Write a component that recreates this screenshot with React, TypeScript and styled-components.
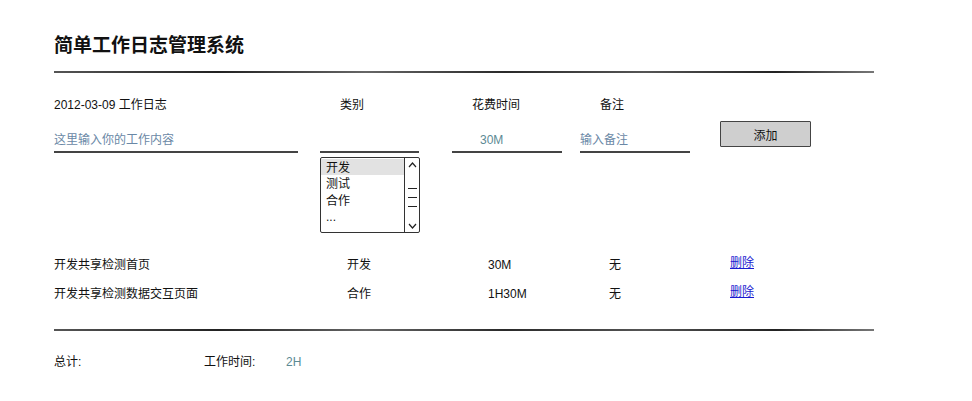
import styled, { createGlobalStyle } from 'styled-components';

const GlobalStyle = createGlobalStyle`
  body {
    margin: 0;
    background: #fff;
    color: #111;
    font-family: "Liberation Sans", "Noto Sans CJK SC", sans-serif;
    font-size: 12px;
  }
`;

const entries = [
  { task: '开发共享检测首页', kind: '开发', time: '30M', note: '无' },
  { task: '开发共享检测数据交互页面', kind: '合作', time: '1H30M', note: '无' },
];

const kinds = ['开发', '测试', '合作', '...'];

function App() {
  return (
    <Page>
      <GlobalStyle />
      <Title>简单工作日志管理系统</Title>
      <Rule />

      <HeaderRow>
        <Cell>2012-03-09 工作日志</Cell>
        <Cell $indent={20}>类别</Cell>
        <Cell $indent={20}>花费时间</Cell>
        <Cell $indent={20}>备注</Cell>
      </HeaderRow>

      <InputRow>
        <Field $width={244}>
          <Placeholder>这里输入你的工作内容</Placeholder>
        </Field>
        <Field $width={99} />
        <Field $width={110} $indent={28}>
          <TimeValue>30M</TimeValue>
        </Field>
        <Field $width={110}>
          <Placeholder>输入备注</Placeholder>
        </Field>
        <AddButton>添加</AddButton>
      </InputRow>

      <ListRow>
        <ListBox>
          <Options>
            {kinds.map((k, i) => (
              <Option key={k} $selected={i === 0}>
                {k}
              </Option>
            ))}
          </Options>
          <ScrollBar>
            <svg width="9" height="6" viewBox="0 0 9 6">
              <path d="M1 5 L4.5 1 L8 5" fill="none" stroke="#222" strokeWidth="1.2" />
            </svg>
            <Grip>
              <span />
              <span />
              <span />
            </Grip>
            <svg width="9" height="6" viewBox="0 0 9 6">
              <path d="M1 1 L4.5 5 L8 1" fill="none" stroke="#222" strokeWidth="1.2" />
            </svg>
          </ScrollBar>
        </ListBox>
      </ListRow>

      <Entries>
        {entries.map((e) => (
          <EntryRow key={e.task}>
            <Cell>{e.task}</Cell>
            <Cell $indent={27}>{e.kind}</Cell>
            <Cell $indent={36}>{e.time}</Cell>
            <Cell $indent={29}>{e.note}</Cell>
            <Cell $indent={10}>
              <DeleteLink href="#">删除</DeleteLink>
            </Cell>
          </EntryRow>
        ))}
      </Entries>

      <Rule $gap={20} />

      <Footer>
        <FooterLabel $width={150}>总计:</FooterLabel>
        <FooterLabel $width={82}>工作时间:</FooterLabel>
        <TotalValue>2H</TotalValue>
      </Footer>
    </Page>
  );
}

const Page = styled.div`
  width: 820px;
  padding: 32px 0 0 54px;
`;

const Title = styled.h1`
  margin: 0;
  font-size: 19px;
  line-height: 24px;
  font-weight: bold;
  font-family: "Noto Sans CJK SC", sans-serif;
`;

const Rule = styled.div<{ $gap?: number }>`
  height: 2px;
  margin-top: ${({ $gap }) => $gap ?? 15}px;
  background: linear-gradient(
    to right,
    #555 0%,
    #222 20%,
    #666 38%,
    #2a2a2a 55%,
    #555 72%,
    #222 88%,
    #777 100%
  );
`;

const columns = '266px 132px 128px 140px 154px';

const HeaderRow = styled.div`
  display: grid;
  grid-template-columns: ${columns};
  margin-top: 22px;
  line-height: 20px;
`;

const Cell = styled.div<{ $indent?: number }>`
  padding-left: ${({ $indent }) => $indent ?? 0}px;
  white-space: nowrap;
`;

const InputRow = styled.div`
  display: grid;
  grid-template-columns: ${columns};
  align-items: start;
  margin-top: 6px;
`;

const Field = styled.div<{ $width: number; $indent?: number }>`
  width: ${({ $width }) => $width}px;
  box-sizing: border-box;
  height: 32px;
  padding: 9px 0 0 ${({ $indent }) => $indent ?? 0}px;
  line-height: 20px;
  border-bottom: 2px solid #444;
`;

const Placeholder = styled.span`
  color: #6a88a6;
`;

const TimeValue = styled.span`
  color: #5c8a94;
`;

const AddButton = styled.button`
  width: 91px;
  height: 26px;
  padding: 0;
  background: #cfcfcf;
  border: 1.5px solid #444;
  border-radius: 1px;
  font-family: "Liberation Sans", "Noto Sans CJK SC", sans-serif;
  font-size: 12px;
  color: #111;
`;

const ListRow = styled.div`
  display: grid;
  grid-template-columns: ${columns};
  margin-top: 4px;
`;

const ListBox = styled.div`
  grid-column: 2;
  width: 100px;
  height: 76px;
  box-sizing: border-box;
  display: flex;
  border: 1.5px solid #333;
  border-radius: 2px;
`;

const Options = styled.div`
  flex: 1;
  padding-top: 0.5px;
`;

const Option = styled.div<{ $selected?: boolean }>`
  height: 16.5px;
  line-height: 18px;
  padding-left: 5px;
  background: ${({ $selected }) => ($selected ? '#e2e2e2' : 'transparent')};
`;

const ScrollBar = styled.div`
  width: 14px;
  border-left: 1px solid #333;
  display: flex;
  flex-direction: column;
  align-items: center;
  justify-content: space-between;
  padding: 4px 0 3px;
`;

const Grip = styled.div`
  display: flex;
  flex-direction: column;
  gap: 8px;
  margin-top: 4px;

  span {
    display: block;
    width: 9px;
    height: 1px;
    background: #222;
  }
`;

const Entries = styled.div`
  margin-top: 18px;
`;

const EntryRow = styled.div`
  display: grid;
  grid-template-columns: ${columns};
  height: 29px;
  line-height: 29px;
`;

const DeleteLink = styled.a`
  position: relative;
  top: -2px;
  color: #1a1ad0;
  text-decoration: underline;
`;

const Footer = styled.div`
  display: flex;
  margin-top: 21px;
  line-height: 20px;
`;

const FooterLabel = styled.div<{ $width: number }>`
  width: ${({ $width }) => $width}px;
`;

const TotalValue = styled.div`
  color: #5c8a94;
`;

export default App;
